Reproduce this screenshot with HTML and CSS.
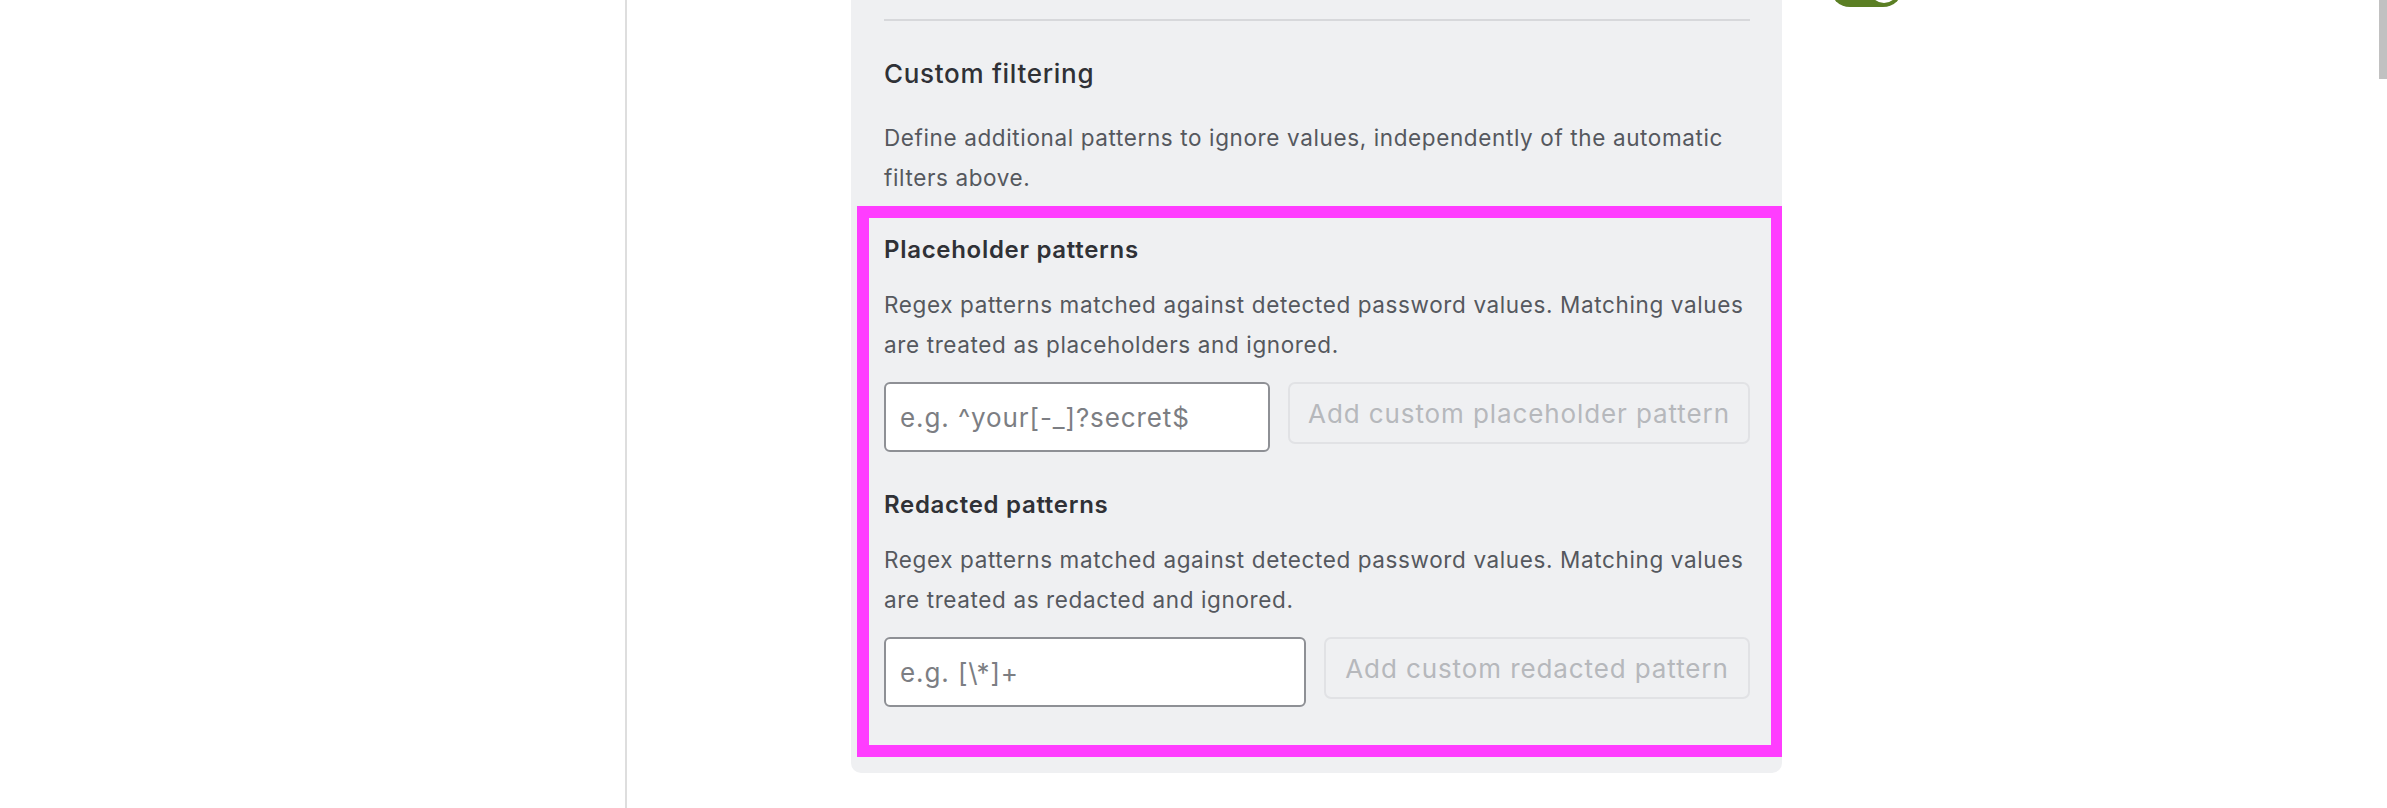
FILE: index.html
```html
<!DOCTYPE html>
<html lang="en">
<head>
<meta charset="utf-8">
<title>Custom filtering</title>
<link rel="stylesheet" href="styles.css">
</head>
<body>
<div class="page">
  <aside class="sidebar"></aside>
  <main class="main">
    <section class="panel">
      <hr class="divider">
      <h2 class="panel-title">Custom filtering</h2>
      <p class="panel-desc">Define additional patterns to ignore values, independently of the automatic filters above.</p>
      <div class="highlight">
        <div class="group">
          <h3 class="group-title">Placeholder patterns</h3>
          <p class="group-desc">Regex patterns matched against detected password values. Matching values are treated as placeholders and ignored.</p>
          <div class="field-row">
            <input class="field field-placeholder" type="text" placeholder="e.g. ^your[-_]?secret$">
            <button class="add-btn" disabled>Add custom placeholder pattern</button>
          </div>
        </div>
        <div class="group group-redacted">
          <h3 class="group-title">Redacted patterns</h3>
          <p class="group-desc">Regex patterns matched against detected password values. Matching values are treated as redacted and ignored.</p>
          <div class="field-row">
            <input class="field field-redacted" type="text" placeholder="e.g. [\*]+">
            <button class="add-btn" disabled>Add custom redacted pattern</button>
          </div>
        </div>
      </div>
    </section>
    <div class="toggle-col">
      <span class="toggle"><span class="toggle-knob"></span></span>
    </div>
  </main>
  <div class="scrollbar"><div class="scroll-thumb"></div></div>
</div>
</body>
</html>
```
FILE: styles.css
```css
* { box-sizing: border-box; }
html, body {
  margin: 0;
  padding: 0;
  background: #ffffff;
  overflow: hidden;
}
body {
  width: 2387px;
  height: 808px;
  font-family: Inter, "Noto Sans", "Liberation Sans", sans-serif;
  color: #2f3136;
}
.page {
  display: flex;
  width: 2387px;
  height: 808px;
}
.sidebar {
  width: 627px;
  flex: 0 0 627px;
  border-right: 2px solid #dedede;
}
.main {
  flex: 1;
  display: flex;
  align-items: flex-start;
  padding-left: 224px;
}
.panel {
  width: 931px;
  flex: 0 0 931px;
  background: #eff0f2;
  border-radius: 0 0 10px 10px;
  padding: 19px 32px 66px 33px;
}
.divider {
  margin: 0;
  border: 0;
  height: 2px;
  background: #d7d8db;
}
.panel-title {
  margin: 35px 0 0;
  font-size: 26px;
  line-height: 36px;
  font-weight: 500;
  letter-spacing: 0.7px;
  color: #2f3136;
}
.panel-desc {
  margin: 26px 0 0;
  font-size: 22.5px;
  line-height: 40px;
  letter-spacing: 0.62px;
  color: #55585e;
}
.highlight {
  position: relative;
  margin-top: 37px;
}
.highlight::after {
  content: "";
  position: absolute;
  left: -27px;
  right: -32px;
  top: -29px;
  bottom: -50px;
  border: 12px solid #ff3dff;
  border-right-width: 11px;
  pointer-events: none;
}
.group-redacted {
  margin-top: 38px;
}
.group-title {
  margin: 0;
  font-size: 24px;
  line-height: 30px;
  font-weight: 600;
  letter-spacing: 0.7px;
  color: #2f3136;
}
.group-desc {
  margin: 20px 0 0;
  font-size: 22.5px;
  line-height: 40px;
  letter-spacing: 0.62px;
  color: #55585e;
}
.field-row {
  display: flex;
  align-items: flex-start;
  gap: 18px;
  margin-top: 17px;
}
.field {
  height: 70px;
  border: 2px solid #8e9095;
  border-radius: 6px;
  background: #ffffff;
  padding: 0 14px;
  font-family: inherit;
  font-size: 26px;
  letter-spacing: 0.9px;
  color: #2f3136;
  outline: none;
}
.field::placeholder {
  color: #7c7e83;
  opacity: 1;
}
.field-placeholder { width: 386px; }
.field-redacted { width: 422px; }
.add-btn {
  flex: 1;
  height: 62px;
  border: 2px solid #e1e2e5;
  border-radius: 7px;
  background: #eff0f2;
  font-family: inherit;
  font-size: 26px;
  letter-spacing: 0.9px;
  color: #b6b8bc;
  padding: 0 16px;
  text-align: center;
  white-space: nowrap;
}
.toggle-col {
  padding-left: 48px;
}
.toggle {
  display: block;
  position: relative;
  width: 73px;
  height: 40px;
  margin-top: -33px;
  border-radius: 20px;
  background: #5b7f24;
}
.toggle-knob {
  position: absolute;
  right: 4px;
  top: 4px;
  width: 30px;
  height: 32px;
  border-radius: 50%;
  background: #ffffff;
}
.scrollbar {
  position: absolute;
  top: 0;
  right: 0;
  width: 8px;
  height: 808px;
}
.scroll-thumb {
  width: 8px;
  height: 79px;
  background: #c1c1c1;
}
```
